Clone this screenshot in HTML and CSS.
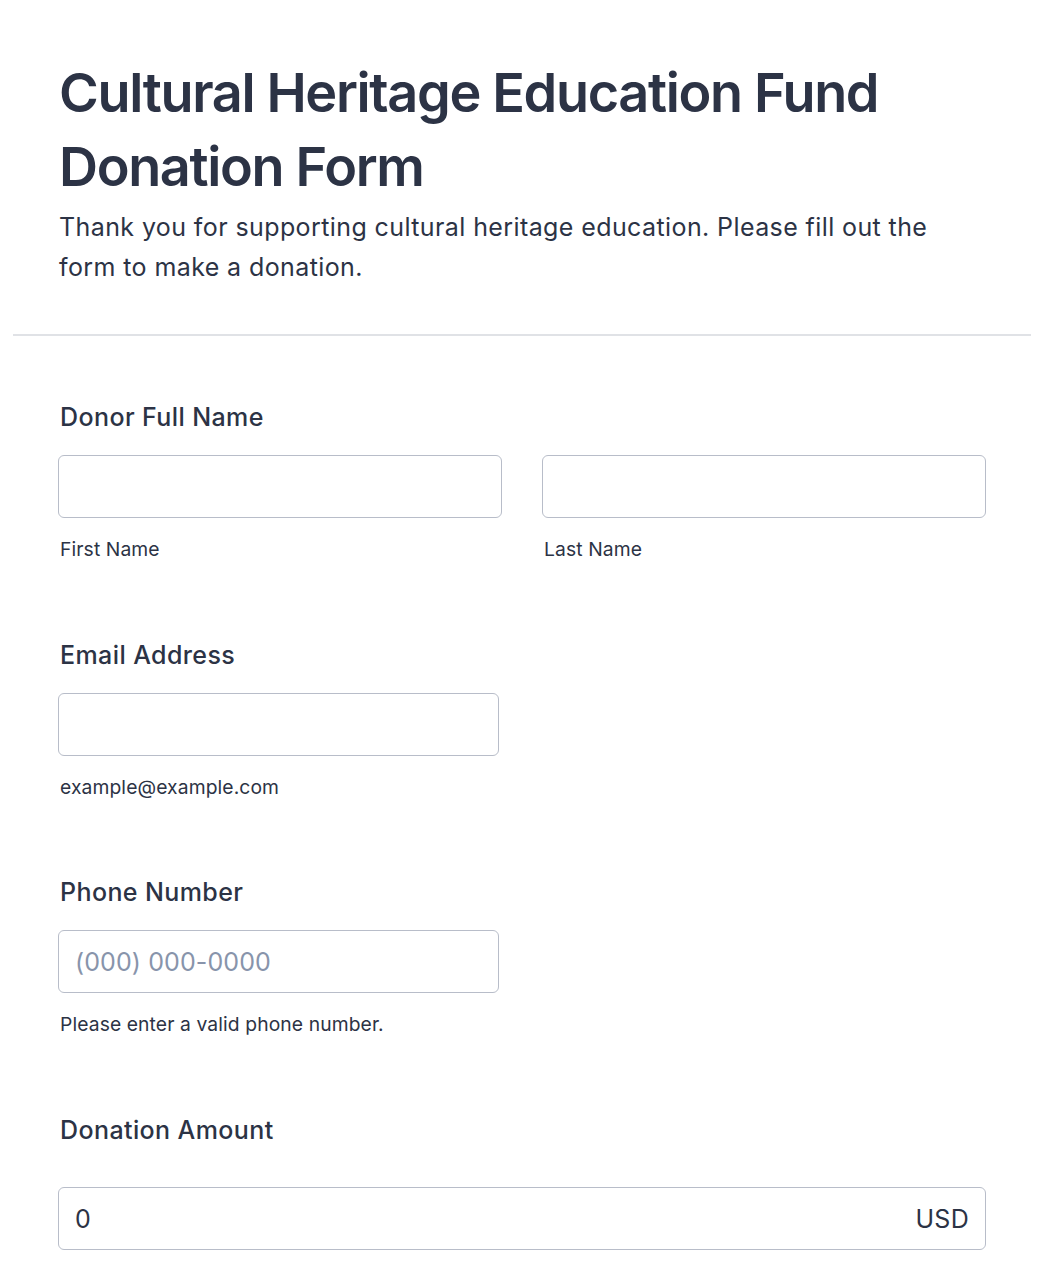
FILE: index.html
```html
<!DOCTYPE html>
<html lang="en">
<head>
<meta charset="utf-8">
<title>Cultural Heritage Education Fund Donation Form</title>
<link rel="stylesheet" href="styles.css">
</head>
<body>
<header class="header">
  <h1 class="title">Cultural Heritage Education Fund Donation Form</h1>
  <p class="subtitle">Thank you for supporting cultural heritage education. Please fill out the form to make a donation.</p>
</header>
<hr class="divider">
<form class="form">
  <div class="field">
    <label class="label">Donor Full Name</label>
    <div class="name-row">
      <div class="sub">
        <input class="input" type="text">
        <span class="sublabel">First Name</span>
      </div>
      <div class="sub">
        <input class="input" type="text">
        <span class="sublabel">Last Name</span>
      </div>
    </div>
  </div>
  <div class="field">
    <label class="label">Email Address</label>
    <div class="sub half">
      <input class="input" type="email">
      <span class="sublabel">example@example.com</span>
    </div>
  </div>
  <div class="field">
    <label class="label">Phone Number</label>
    <div class="sub half">
      <input class="input" type="tel" placeholder="(000) 000-0000">
      <span class="sublabel">Please enter a valid phone number.</span>
    </div>
  </div>
  <div class="field field-amount">
    <label class="label">Donation Amount</label>
    <div class="amount">
      <input class="amount-input" type="text" value="0">
      <span class="currency">USD</span>
    </div>
  </div>
</form>
</body>
</html>
```

FILE: styles.css
```css
html, body {
  margin: 0;
  padding: 0;
  background: #ffffff;
}

body {
  font-family: "Inter", "Noto Sans", sans-serif;
  color: #2c3345;
}

.header {
  padding: 56px 59px 0 59px;
}

.title {
  margin: 0;
  font-size: 54px;
  line-height: 74px;
  font-weight: 600;
  letter-spacing: -1.35px;
  color: #2c3345;
}

.subtitle {
  margin: 3px 0 0 0;
  font-size: 25px;
  line-height: 40px;
  font-weight: 400;
  letter-spacing: 0.4px;
  color: #2c3345;
}

.divider {
  margin: 47px 13px 0 13px;
  border: 0;
  height: 2px;
  background: #e0e2e6;
}

.form {
  padding: 63px 58px 40px 58px;
  display: flex;
  flex-direction: column;
  gap: 73.5px;
}

.field {
  display: flex;
  flex-direction: column;
}

.label {
  display: block;
  padding-left: 2px;
  font-size: 25px;
  line-height: 36px;
  font-weight: 500;
  letter-spacing: 0.4px;
  color: #2c3345;
  margin-bottom: 20px;
}

.field-amount .label {
  margin-bottom: 39.5px;
}

.name-row {
  display: grid;
  grid-template-columns: 1fr 1fr;
  gap: 40px;
}

.sub {
  display: flex;
  flex-direction: column;
}

.half {
  width: 441px;
}

.input {
  box-sizing: border-box;
  width: 100%;
  height: 63px;
  margin: 0;
  padding: 0 16px;
  border: 1px solid #b8bdc9;
  border-radius: 6px;
  font-family: "Inter", "Noto Sans", sans-serif;
  font-size: 25px;
  letter-spacing: 0.1px;
  color: #2c3345;
  background: #ffffff;
  outline: none;
}

.input::placeholder {
  color: #8894ab;
  opacity: 1;
}

.sublabel {
  display: block;
  margin-top: 18px;
  padding-left: 2px;
  font-size: 19.3px;
  line-height: 27px;
  letter-spacing: 0.1px;
  color: #2c3345;
}

.amount {
  box-sizing: border-box;
  display: flex;
  align-items: center;
  height: 63px;
  padding: 0 16px;
  border: 1px solid #b8bdc9;
  border-radius: 6px;
  background: #ffffff;
}

.amount-input {
  flex: 1;
  min-width: 0;
  border: 0;
  padding: 0;
  margin: 0;
  outline: none;
  font-family: "Inter", "Noto Sans", sans-serif;
  font-size: 25px;
  color: #2c3345;
  background: transparent;
}

.currency {
  font-size: 25px;
  letter-spacing: 0.3px;
  color: #2c3345;
}
```
